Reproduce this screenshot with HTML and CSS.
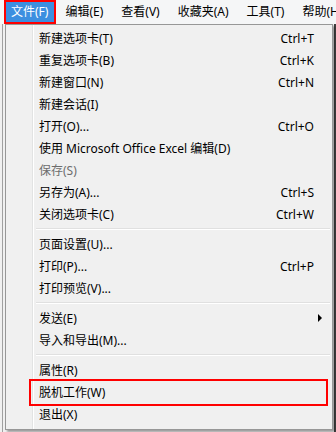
FILE: index.html
```html
<!DOCTYPE html>
<html lang="zh-CN">
<head>
<meta charset="utf-8">
<link rel="stylesheet" href="styles.css">
</head>
<body>
<div class="screen">
  <div class="menubar">
    <div class="bar-item active">文件(F)</div>
    <div class="bar-item">编辑(E)</div>
    <div class="bar-item">查看(V)</div>
    <div class="bar-item">收藏夹(A)</div>
    <div class="bar-item">工具(T)</div>
    <div class="bar-item">帮助(H)</div>
  </div>
  <div class="window">
    <div class="menu">
      <div class="item"><span>新建选项卡(T)</span><span class="key">Ctrl+T</span></div>
      <div class="item"><span>重复选项卡(B)</span><span class="key">Ctrl+K</span></div>
      <div class="item"><span>新建窗口(N)</span><span class="key">Ctrl+N</span></div>
      <div class="item"><span>新建会话(I)</span></div>
      <div class="item"><span>打开(O)...</span><span class="key">Ctrl+O</span></div>
      <div class="item"><span>使用 Microsoft Office Excel 编辑(D)</span></div>
      <div class="item disabled"><span>保存(S)</span></div>
      <div class="item"><span>另存为(A)...</span><span class="key">Ctrl+S</span></div>
      <div class="item"><span>关闭选项卡(C)</span><span class="key">Ctrl+W</span></div>
      <div class="sep"></div>
      <div class="item"><span>页面设置(U)...</span></div>
      <div class="item"><span>打印(P)...</span><span class="key">Ctrl+P</span></div>
      <div class="item"><span>打印预览(V)...</span></div>
      <div class="sep"></div>
      <div class="item"><span>发送(E)</span><span class="arrow"></span></div>
      <div class="item"><span>导入和导出(M)...</span></div>
      <div class="sep"></div>
      <div class="item"><span>属性(R)</span></div>
      <div class="item marked"><span>脱机工作(W)</span></div>
      <div class="item"><span>退出(X)</span></div>
    </div>
  </div>
</div>
</body>
</html>
```
FILE: styles.css
```css
html, body {
  margin: 0;
  padding: 0;
}
body {
  width: 336px;
  height: 432px;
  overflow: hidden;
  background: #f0f0f0;
  font-family: "Noto Sans", "Noto Sans CJK SC", sans-serif;
  font-size: 12px;
  color: #000;
}
.screen {
  width: 336px;
  height: 432px;
  display: flex;
  flex-direction: column;
  overflow: hidden;
}
.menubar {
  height: 24px;
  display: flex;
  align-items: stretch;
  padding-left: 4px;
  background: #f5f6f7;
  white-space: nowrap;
  overflow: hidden;
}
.bar-item {
  flex: none;
  display: flex;
  align-items: center;
  padding: 0 9px;
  line-height: 20px;
}
.bar-item.active {
  padding: 0 6px 0 5px;
  background: #3c8fe0;
  color: #fff;
  border: 2px solid #ff0000;
}
.window {
  flex: 1;
  display: flex;
  border-left: 1px solid #a0a0a0;
  border-right: 2px solid #404040;
  margin-left: 2px;
  padding-left: 2px;
  background: #f0f0f0;
}
.menu {
  width: 322px;
  height: 400px;
  border: 1px solid #979797;
  padding: 2px;
  background:
    linear-gradient(to right, transparent 26px, #e2e3e3 26px, #e2e3e3 27px, #ffffff 27px, #ffffff 28px, transparent 28px),
    #f0f0f0;
  box-shadow: 2px 2px 2px rgba(0, 0, 0, 0.35);
}
.item {
  position: relative;
  height: 22px;
  display: flex;
  align-items: center;
  justify-content: space-between;
  padding: 0 16px 0 31px;
  white-space: nowrap;
}
.key {
  text-align: right;
}
.disabled {
  color: #6d6d6d;
}
.arrow {
  width: 0;
  height: 0;
  margin-right: -8px;
  border-left: 4px solid #000;
  border-top: 4px solid transparent;
  border-bottom: 4px solid transparent;
}
.sep {
  height: 8px;
  margin-left: 28px;
  background: linear-gradient(to bottom, transparent 3px, #e0e0e0 3px, #e0e0e0 4px, #ffffff 4px, #ffffff 5px, transparent 5px);
}
.marked::after {
  content: "";
  position: absolute;
  left: 21px;
  right: 2px;
  top: -2px;
  bottom: -3px;
  border: 2px solid #ff0000;
}
```
